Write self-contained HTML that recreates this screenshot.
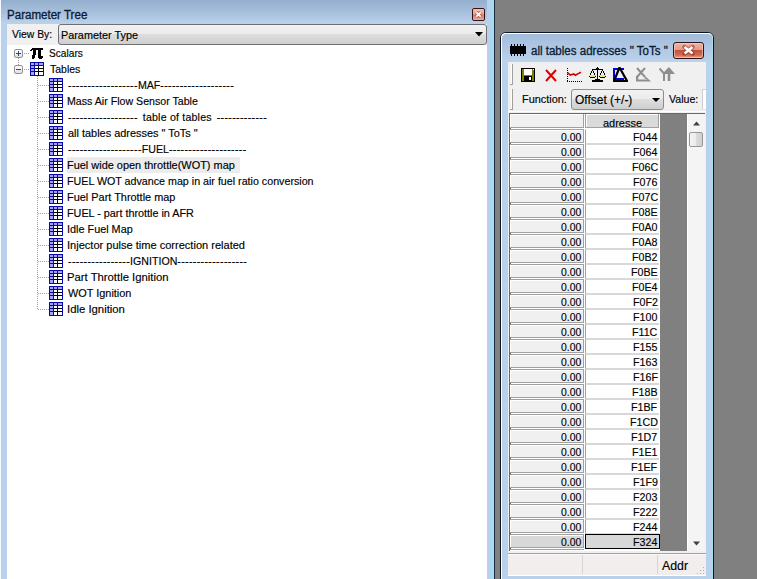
<!DOCTYPE html><html><head><meta charset="utf-8"><style>
*{margin:0;padding:0;box-sizing:border-box}
html,body{width:757px;height:579px;overflow:hidden;background:#808080;font-family:"Liberation Sans", sans-serif}
.a{position:absolute}
.t{position:absolute;white-space:pre;font-family:"Liberation Sans", sans-serif;transform-origin:0 0;-webkit-text-stroke:0.15px currentColor}
</style></head><body><div class="a" style="left:0;top:0;width:495px;height:579px;background:linear-gradient(#95afce 0px,#a6bfdb 12px,#b9d1ea 23px,#b9d1ea 100%)"></div>
<div class="a" style="left:0;top:0;width:1px;height:579px;background:#f6f9fd"></div>
<div class="a" style="left:487px;top:0;width:7px;height:579px;background:linear-gradient(90deg,#bccfea,#b4d4ee 40%,#a2dbf4 85%,#9edcf4)"></div>
<div class="a" style="left:494px;top:0;width:1px;height:579px;background:#1f2f3f"></div>
<div class="t" style="left:7.04px;top:9px;font-size:12px;line-height:12px;color:#0b1a33;letter-spacing:0px;transform:scaleX(0.9634);-webkit-text-stroke:0.3px #0b1a33">Parameter Tree</div>
<div class="a" style="left:472px;top:8px;width:13px;height:13px;border:1px solid #3a1212;border-radius:2px;background:linear-gradient(#f2c2b8,#e8a898 45%,#d07868 55%,#eab0a4)"></div>
<svg class="a" style="left:472px;top:8px" width="13" height="13"><path d="M4.3 4.3 L8.7 8.7 M8.7 4.3 L4.3 8.7" stroke="#8a3a30" stroke-width="3.6" stroke-opacity="0.6"/><path d="M4.3 4.3 L8.7 8.7 M8.7 4.3 L4.3 8.7" stroke="#fff" stroke-width="1.9"/></svg>
<div class="a" style="left:7px;top:24px;width:480px;height:21px;background:#f0f0f0"></div>
<div class="t" style="left:12.00px;top:29px;font-size:11px;line-height:11px;color:#000;letter-spacing:0px;transform:scaleX(0.9429);">View By:</div>
<div class="a" style="left:58px;top:24px;width:429px;height:21px;border:1px solid #707070;border-radius:3px;background:linear-gradient(#f2f2f2 0%,#ebebeb 50%,#dddddd 50%,#cfcfcf 100%)"></div>
<div class="t" style="left:61.01px;top:30px;font-size:11px;line-height:11px;color:#000;letter-spacing:0px;transform:scaleX(0.9857);">Parameter Type</div>
<svg class="a" style="left:475px;top:32px" width="8" height="5"><path d="M0 0H8L4 4.5Z" fill="#000"/></svg>
<div class="a" style="left:7px;top:45px;width:480px;height:534px;background:#fff"></div>
<svg width="0" height="0" style="position:absolute"><defs>
<symbol id="tbl" viewBox="0 0 14 14" shape-rendering="crispEdges">
<rect x="0" y="0" width="14" height="14" fill="#0808a8"/>
<rect x="1" y="1" width="12" height="12" fill="#a4a4f4"/>
<rect x="5" y="4" width="8" height="9" fill="#000"/>
<rect x="5" y="4" width="3" height="2" fill="#fff"/><rect x="9" y="4" width="4" height="2" fill="#fff"/>
<rect x="5" y="7" width="3" height="2" fill="#fff"/><rect x="9" y="7" width="4" height="2" fill="#fff"/>
<rect x="5" y="10" width="3" height="3" fill="#fff"/><rect x="9" y="10" width="4" height="3" fill="#fff"/>
<rect x="4" y="0" width="1" height="14" fill="#0808a8"/><rect x="0" y="3" width="14" height="1" fill="#0808a8"/>
<rect x="8" y="0" width="1" height="4" fill="#0808a8"/>
<rect x="0" y="6" width="5" height="1" fill="#0808a8"/><rect x="0" y="9" width="5" height="1" fill="#0808a8"/>
</symbol>
<symbol id="pi" viewBox="0 0 14 11" shape-rendering="crispEdges">
<path d="M2 0H13V2H11V8H13V10H12V11H9V10H8V2H6V7H5V10H4V11H2V7H3V2H2V3H0V2H1V1H2Z" fill="#000"/>
</symbol>
</defs></svg>
<div class="a" style="left:18px;top:58px;width:1px;height:7px;background:repeating-linear-gradient(#a0a0a0 0 1px,transparent 1px 2px)"></div>
<div class="a" style="left:14px;top:49px;width:9px;height:9px;border:1px solid #939393;border-radius:2px;background:linear-gradient(#fff,#e0e0e0)"></div><div class="a" style="left:16px;top:53px;width:5px;height:1px;background:#2c4d7a"></div><div class="a" style="left:18px;top:51px;width:1px;height:5px;background:#2c4d7a"></div>
<div class="a" style="left:24px;top:53px;width:6px;height:1px;background:repeating-linear-gradient(90deg,#a0a0a0 0 1px,transparent 1px 2px)"></div>
<svg class="a" style="left:30px;top:48px" width="14" height="11"><use href="#pi"/></svg>
<div class="t" style="left:48.88px;top:48px;font-size:11px;line-height:11px;color:#000;letter-spacing:0px;transform:scaleX(0.9222);">Scalars</div>
<div class="a" style="left:14px;top:65px;width:9px;height:9px;border:1px solid #939393;border-radius:2px;background:linear-gradient(#fff,#e0e0e0)"></div><div class="a" style="left:16px;top:69px;width:5px;height:1px;background:#2c4d7a"></div>
<div class="a" style="left:24px;top:69px;width:6px;height:1px;background:repeating-linear-gradient(90deg,#a0a0a0 0 1px,transparent 1px 2px)"></div>
<svg class="a" style="left:30px;top:62px" width="14" height="14"><use href="#tbl"/></svg>
<div class="t" style="left:49.80px;top:64px;font-size:11px;line-height:11px;color:#000;letter-spacing:0px;transform:scaleX(0.9531);">Tables</div>
<div class="a" style="left:37px;top:76px;width:1px;height:234px;background:repeating-linear-gradient(#a0a0a0 0 1px,transparent 1px 2px)"></div>
<div class="a" style="left:38px;top:85px;width:11px;height:1px;background:repeating-linear-gradient(90deg,#a0a0a0 0 1px,transparent 1px 2px)"></div>
<svg class="a" style="left:49px;top:78px" width="14" height="14"><use href="#tbl"/></svg>
<div class="t" style="left:68.30px;top:80px;font-size:11px;line-height:11px;color:#000;letter-spacing:0px;transform:scaleX(0.9650);"><span style='letter-spacing:0.36px'>------------------</span>MAF<span style='letter-spacing:0.36px'>-------------------</span></div>
<div class="a" style="left:38px;top:101px;width:11px;height:1px;background:repeating-linear-gradient(90deg,#a0a0a0 0 1px,transparent 1px 2px)"></div>
<svg class="a" style="left:49px;top:94px" width="14" height="14"><use href="#tbl"/></svg>
<div class="t" style="left:67.33px;top:96px;font-size:11px;line-height:11px;color:#000;letter-spacing:0px;transform:scaleX(0.9657);">Mass Air Flow Sensor Table</div>
<div class="a" style="left:38px;top:117px;width:11px;height:1px;background:repeating-linear-gradient(90deg,#a0a0a0 0 1px,transparent 1px 2px)"></div>
<svg class="a" style="left:49px;top:110px" width="14" height="14"><use href="#tbl"/></svg>
<div class="t" style="left:68.30px;top:112px;font-size:11px;line-height:11px;color:#000;letter-spacing:0px;transform:scaleX(0.9650);"><span style='letter-spacing:0.36px'>------------------</span> <span style="margin:0 2px;letter-spacing:0.2px">table of tables</span> <span style='letter-spacing:0.36px'>-------------</span></div>
<div class="a" style="left:38px;top:133px;width:11px;height:1px;background:repeating-linear-gradient(90deg,#a0a0a0 0 1px,transparent 1px 2px)"></div>
<svg class="a" style="left:49px;top:126px" width="14" height="14"><use href="#tbl"/></svg>
<div class="t" style="left:68.30px;top:128px;font-size:11px;line-height:11px;color:#000;letter-spacing:0px;transform:scaleX(0.9931);">all tables adresses &quot; ToTs &quot;</div>
<div class="a" style="left:38px;top:149px;width:11px;height:1px;background:repeating-linear-gradient(90deg,#a0a0a0 0 1px,transparent 1px 2px)"></div>
<svg class="a" style="left:49px;top:142px" width="14" height="14"><use href="#tbl"/></svg>
<div class="t" style="left:68.30px;top:144px;font-size:11px;line-height:11px;color:#000;letter-spacing:0px;transform:scaleX(0.9650);"><span style='letter-spacing:0.36px'>-------------------</span>FUEL<span style='letter-spacing:0.36px'>--------------------</span></div>
<div class="a" style="left:38px;top:165px;width:11px;height:1px;background:repeating-linear-gradient(90deg,#a0a0a0 0 1px,transparent 1px 2px)"></div>
<div class="a" style="left:67px;top:157px;width:173px;height:16px;background:#ececec"></div>
<svg class="a" style="left:49px;top:158px" width="14" height="14"><use href="#tbl"/></svg>
<div class="t" style="left:67.31px;top:160px;font-size:11px;line-height:11px;color:#000;letter-spacing:0px;transform:scaleX(0.9946);">Fuel wide open throttle(WOT) map</div>
<div class="a" style="left:38px;top:181px;width:11px;height:1px;background:repeating-linear-gradient(90deg,#a0a0a0 0 1px,transparent 1px 2px)"></div>
<svg class="a" style="left:49px;top:174px" width="14" height="14"><use href="#tbl"/></svg>
<div class="t" style="left:67.33px;top:176px;font-size:11px;line-height:11px;color:#000;letter-spacing:0px;transform:scaleX(0.9718);">FUEL WOT advance map in air fuel ratio conversion</div>
<div class="a" style="left:38px;top:197px;width:11px;height:1px;background:repeating-linear-gradient(90deg,#a0a0a0 0 1px,transparent 1px 2px)"></div>
<svg class="a" style="left:49px;top:190px" width="14" height="14"><use href="#tbl"/></svg>
<div class="t" style="left:67.31px;top:192px;font-size:11px;line-height:11px;color:#000;letter-spacing:0px;transform:scaleX(0.9926);">Fuel Part Throttle map</div>
<div class="a" style="left:38px;top:213px;width:11px;height:1px;background:repeating-linear-gradient(90deg,#a0a0a0 0 1px,transparent 1px 2px)"></div>
<svg class="a" style="left:49px;top:206px" width="14" height="14"><use href="#tbl"/></svg>
<div class="t" style="left:67.32px;top:208px;font-size:11px;line-height:11px;color:#000;letter-spacing:0px;transform:scaleX(0.9820);">FUEL - part throttle in AFR</div>
<div class="a" style="left:38px;top:229px;width:11px;height:1px;background:repeating-linear-gradient(90deg,#a0a0a0 0 1px,transparent 1px 2px)"></div>
<svg class="a" style="left:49px;top:222px" width="14" height="14"><use href="#tbl"/></svg>
<div class="t" style="left:67.31px;top:224px;font-size:11px;line-height:11px;color:#000;letter-spacing:0px;transform:scaleX(0.9862);">Idle Fuel Map</div>
<div class="a" style="left:38px;top:245px;width:11px;height:1px;background:repeating-linear-gradient(90deg,#a0a0a0 0 1px,transparent 1px 2px)"></div>
<svg class="a" style="left:49px;top:238px" width="14" height="14"><use href="#tbl"/></svg>
<div class="t" style="left:67.30px;top:240px;font-size:11px;line-height:11px;color:#000;letter-spacing:0px;transform:scaleX(1.0040);">Injector pulse time correction related</div>
<div class="a" style="left:38px;top:261px;width:11px;height:1px;background:repeating-linear-gradient(90deg,#a0a0a0 0 1px,transparent 1px 2px)"></div>
<svg class="a" style="left:49px;top:254px" width="14" height="14"><use href="#tbl"/></svg>
<div class="t" style="left:68.30px;top:256px;font-size:11px;line-height:11px;color:#000;letter-spacing:0px;transform:scaleX(0.9650);"><span style='letter-spacing:0.36px'>----------------</span>IGNITION<span style='letter-spacing:0.36px'>------------------</span></div>
<div class="a" style="left:38px;top:277px;width:11px;height:1px;background:repeating-linear-gradient(90deg,#a0a0a0 0 1px,transparent 1px 2px)"></div>
<svg class="a" style="left:49px;top:270px" width="14" height="14"><use href="#tbl"/></svg>
<div class="t" style="left:67.27px;top:272px;font-size:11px;line-height:11px;color:#000;letter-spacing:0px;transform:scaleX(1.0268);">Part Throttle Ignition</div>
<div class="a" style="left:38px;top:293px;width:11px;height:1px;background:repeating-linear-gradient(90deg,#a0a0a0 0 1px,transparent 1px 2px)"></div>
<svg class="a" style="left:49px;top:286px" width="14" height="14"><use href="#tbl"/></svg>
<div class="t" style="left:68.30px;top:288px;font-size:11px;line-height:11px;color:#000;letter-spacing:0px;transform:scaleX(0.9905);">WOT Ignition</div>
<div class="a" style="left:38px;top:309px;width:11px;height:1px;background:repeating-linear-gradient(90deg,#a0a0a0 0 1px,transparent 1px 2px)"></div>
<svg class="a" style="left:49px;top:302px" width="14" height="14"><use href="#tbl"/></svg>
<div class="t" style="left:67.27px;top:304px;font-size:11px;line-height:11px;color:#000;letter-spacing:0px;transform:scaleX(1.0291);">Idle Ignition</div>
<div class="a" style="left:500px;top:32px;width:214px;height:560px;border:1px solid #0d1520;border-radius:6px 6px 0 0;background:#fff"></div>
<div class="a" style="left:501px;top:33px;width:212px;height:560px;border-radius:5px 5px 0 0;border-top:1px solid #fff;border-left:1px solid #fff;border-right:1px solid #a8dcf0;background:linear-gradient(#a2bcdb 0px,#aec6e2 12px,#bcd3ec 28px,#b9d1ea 60px,#b9d1ea 100%)"></div>
<svg class="a" style="left:510px;top:44px" width="17" height="12" shape-rendering="crispEdges"><rect x="0" y="2" width="16" height="8" fill="#000"/><rect x="1" y="0" width="1" height="2" fill="#000"/><rect x="1" y="10" width="1" height="2" fill="#000"/><rect x="4" y="0" width="1" height="2" fill="#000"/><rect x="4" y="10" width="1" height="2" fill="#000"/><rect x="7" y="0" width="1" height="2" fill="#000"/><rect x="7" y="10" width="1" height="2" fill="#000"/><rect x="10" y="0" width="1" height="2" fill="#000"/><rect x="10" y="10" width="1" height="2" fill="#000"/><rect x="13" y="0" width="1" height="2" fill="#000"/><rect x="13" y="10" width="1" height="2" fill="#000"/></svg>
<div class="t" style="left:530.80px;top:45px;font-size:12px;line-height:12px;color:#0b1a33;letter-spacing:0px;transform:scaleX(0.9613);-webkit-text-stroke:0.3px #0b1a33">all tables adresses &quot; ToTs &quot;</div>
<div class="a" style="left:673px;top:42px;width:31px;height:17px;border:1px solid #2e1414;border-radius:3px;box-shadow:inset 0 0 0 1px rgba(255,210,200,0.6);background:linear-gradient(#eeb4a8 0%,#e49a8a 45%,#c85038 50%,#d26a52 80%,#e8a494 100%)"></div>
<svg class="a" style="left:673px;top:42px" width="31" height="17"><path d="M11.5 5 L19.5 11.5 M19.5 5 L11.5 11.5" stroke="#7a2a20" stroke-width="4.4" stroke-opacity="0.55" stroke-linecap="round"/><path d="M11.5 5 L19.5 11.5 M19.5 5 L11.5 11.5" stroke="#fff" stroke-width="2.6"/></svg>
<div class="a" style="left:508px;top:62px;width:198px;height:513px;background:#f0f0f0"></div>
<div class="a" style="left:511px;top:64px;width:1px;height:20px;background:#fff"></div><div class="a" style="left:512px;top:64px;width:1px;height:21px;background:#a0a0a0"></div><div class="a" style="left:510px;top:84px;width:3px;height:1px;background:#a0a0a0"></div>
<div class="a" style="left:511px;top:89px;width:1px;height:20px;background:#fff"></div><div class="a" style="left:512px;top:89px;width:1px;height:21px;background:#a0a0a0"></div><div class="a" style="left:510px;top:109px;width:3px;height:1px;background:#a0a0a0"></div>
<svg class="a" style="left:521px;top:68px" width="14" height="14" shape-rendering="crispEdges"><rect x="0" y="0" width="14" height="14" fill="#000"/><rect x="1" y="1" width="12" height="12" fill="#808000"/><rect x="3" y="1" width="8" height="6" fill="#fff"/><rect x="3" y="8" width="8" height="5" fill="#000"/><rect x="8" y="9" width="2" height="3" fill="#fff"/><rect x="12" y="1" width="1" height="1" fill="#fff"/></svg>
<svg class="a" style="left:545px;top:69px" width="12" height="13"><path d="M1 1 L11 12 M11 1 L1 12" stroke="#e00000" stroke-width="2"/></svg>
<svg class="a" style="left:567px;top:68px" width="15" height="14" shape-rendering="crispEdges"><rect x="0" y="0" width="1" height="1" fill="#000"/><rect x="0" y="2" width="1" height="1" fill="#000"/><rect x="0" y="4" width="1" height="1" fill="#000"/><rect x="0" y="6" width="1" height="1" fill="#000"/><rect x="0" y="8" width="1" height="1" fill="#000"/><rect x="0" y="10" width="1" height="1" fill="#000"/><rect x="0" y="12" width="1" height="1" fill="#000"/><rect x="0" y="13" width="1" height="1" fill="#000"/><rect x="2" y="13" width="1" height="1" fill="#000"/><rect x="4" y="13" width="1" height="1" fill="#000"/><rect x="6" y="13" width="1" height="1" fill="#000"/><rect x="8" y="13" width="1" height="1" fill="#000"/><rect x="10" y="13" width="1" height="1" fill="#000"/><rect x="12" y="13" width="1" height="1" fill="#000"/><rect x="14" y="13" width="1" height="1" fill="#000"/><path d="M0.5 4.7 L3.3 7 L6.8 6 L8.5 7.3 L11.2 5.6 L14 4.2" stroke="#d00000" stroke-width="1.6" fill="none" shape-rendering="auto"/></svg>
<svg class="a" style="left:587px;top:64px" width="20" height="18" shape-rendering="crispEdges"><rect x="10" y="3" width="1" height="14" fill="#000"/><rect x="9" y="4" width="3" height="1" fill="#000"/><rect x="5" y="5" width="11" height="1" fill="#000"/><rect x="5" y="6" width="1" height="1" fill="#000"/><rect x="15" y="6" width="1" height="1" fill="#000"/><rect x="4" y="7" width="1" height="2" fill="#000"/><rect x="6" y="7" width="1" height="2" fill="#000"/><rect x="14" y="7" width="1" height="2" fill="#000"/><rect x="16" y="7" width="1" height="2" fill="#000"/><rect x="3" y="9" width="1" height="2" fill="#000"/><rect x="7" y="9" width="1" height="2" fill="#000"/><rect x="13" y="9" width="1" height="2" fill="#000"/><rect x="17" y="9" width="1" height="2" fill="#000"/><rect x="2" y="11" width="7" height="2" fill="#e8e878"/><rect x="12" y="11" width="7" height="2" fill="#e8e878"/><rect x="3" y="13" width="5" height="1" fill="#000"/><rect x="13" y="13" width="5" height="1" fill="#000"/><rect x="2" y="12" width="1" height="1" fill="#000"/><rect x="8" y="12" width="1" height="1" fill="#000"/><rect x="12" y="12" width="1" height="1" fill="#000"/><rect x="18" y="12" width="1" height="1" fill="#000"/><rect x="5" y="16" width="11" height="2" fill="#000"/><rect x="8" y="15" width="5" height="1" fill="#000"/></svg>
<svg class="a" style="left:613px;top:67px" width="15" height="15" shape-rendering="crispEdges"><rect x="0" y="1" width="11" height="2" fill="#0000e0"/><rect x="0" y="1" width="2" height="13" fill="#0000e0"/><rect x="2" y="11" width="9" height="2" fill="#0000e0"/><path d="M6.5 0.5 L1 14 H14 Z" fill="none" stroke="#000" stroke-width="2.2" shape-rendering="auto"/></svg>
<svg class="a" style="left:636px;top:67px" width="16" height="15"><path d="M1 1L9 10 M9 1L1 10" stroke="#8e8e8e" stroke-width="2" fill="none"/><path d="M0 9V14.5H15L9.5 9.5L8.5 11.5L12 12.5H2.2V9Z" fill="#8e8e8e"/></svg>
<svg class="a" style="left:659px;top:67px" width="16" height="15"><path d="M0.5 1.5L5 6.5 M9.5 2L5 6.5 M5 6V14" stroke="#8e8e8e" stroke-width="2" fill="none"/><path d="M9.5 14V6 M10.5 14V6" stroke="#8e8e8e" stroke-width="1.6"/><path d="M4 7H16L10 0Z" fill="#8e8e8e"/></svg>
<div class="t" style="left:521.81px;top:94px;font-size:11px;line-height:11px;color:#000;letter-spacing:0px;transform:scaleX(0.9909);">Function:</div>
<div class="a" style="left:571px;top:89px;width:93px;height:21px;border:1px solid #8c8c8c;border-radius:3px;background:linear-gradient(#f2f2f2 0%,#ebebeb 50%,#dddddd 50%,#cfcfcf 100%)"></div>
<div class="t" style="left:574.60px;top:94px;font-size:12px;line-height:12px;color:#000;letter-spacing:0px;transform:scaleX(0.9982);">Offset (+/-)</div>
<svg class="a" style="left:652px;top:98px" width="8" height="5"><path d="M0 0H8L4 4Z" fill="#000"/></svg>
<div class="t" style="left:669.00px;top:94px;font-size:11px;line-height:11px;color:#000;letter-spacing:0px;transform:scaleX(0.9633);">Value:</div>
<div class="a" style="left:702px;top:89px;width:4px;height:21px;background:#fff;border-left:1px solid #cfcfcf;border-top:1px solid #cfcfcf;border-bottom:1px solid #e4e4e4"></div>
<div class="a" style="left:508px;top:111px;width:198px;height:1px;background:#fff"></div>
<div class="a" style="left:508px;top:113px;width:197px;height:438px;background:#808080"></div>
<div class="a" style="left:509px;top:113px;width:196px;height:1px;background:#696969"></div>
<div class="a" style="left:509px;top:113px;width:2px;height:438px;background:#696969"></div>
<div class="a" style="left:508px;top:113px;width:1px;height:438px;background:#f0f0f0"></div>
<div class="a" style="left:511px;top:114px;width:149px;height:437px;background:#fff"></div>
<div class="a" style="left:510px;top:114px;width:74px;height:14px;border-right:1px solid #a0a0a0;border-bottom:1px solid #a0a0a0;box-shadow:inset 1px 1px 0 #fff;background:#f0f0f0"></div>
<div class="a" style="left:585px;top:114px;width:74px;height:14px;border-left:1px solid #a0a0a0;border-right:1px solid #a0a0a0;border-bottom:1px solid #a0a0a0;box-shadow:inset 1px 1px 0 #fff;background:#dadada"></div>
<div class="t" style="left:602.70px;top:118px;font-size:11px;line-height:11px;color:#000;letter-spacing:0px;transform:scaleX(0.9974);">adresse</div>
<div class="a" style="left:510px;top:129px;width:74px;height:14px;border:1px solid #a0a0a0;border-left:none;box-shadow:inset 1px 1px 0 #fff;background:#f0f0f0"></div>
<div class="t" style="left:560.60px;top:132px;font-size:11px;line-height:11px;color:#000;letter-spacing:0px;transform:scaleX(0.9429);">0.00</div>
<div class="a" style="left:585px;top:129px;width:74px;height:15px;border-left:1px solid #a0a0a0;border-bottom:1px solid #d8d8d8;border-top:1px solid #fff;background:#fff"></div>
<div class="t" style="left:633.25px;top:132px;font-size:11px;line-height:11px;color:#000;letter-spacing:0px;transform:scaleX(0.9700);">F044</div>
<div class="a" style="left:510px;top:144px;width:74px;height:14px;border:1px solid #a0a0a0;border-left:none;box-shadow:inset 1px 1px 0 #fff;background:#f0f0f0"></div>
<div class="t" style="left:560.60px;top:147px;font-size:11px;line-height:11px;color:#000;letter-spacing:0px;transform:scaleX(0.9429);">0.00</div>
<div class="a" style="left:585px;top:144px;width:74px;height:15px;border-left:1px solid #a0a0a0;border-bottom:1px solid #d8d8d8;border-top:1px solid #d8d8d8;background:#fff"></div>
<div class="t" style="left:633.25px;top:147px;font-size:11px;line-height:11px;color:#000;letter-spacing:0px;transform:scaleX(0.9700);">F064</div>
<div class="a" style="left:510px;top:159px;width:74px;height:14px;border:1px solid #a0a0a0;border-left:none;box-shadow:inset 1px 1px 0 #fff;background:#f0f0f0"></div>
<div class="t" style="left:560.60px;top:162px;font-size:11px;line-height:11px;color:#000;letter-spacing:0px;transform:scaleX(0.9429);">0.00</div>
<div class="a" style="left:585px;top:159px;width:74px;height:15px;border-left:1px solid #a0a0a0;border-bottom:1px solid #d8d8d8;border-top:1px solid #d8d8d8;background:#fff"></div>
<div class="t" style="left:632.28px;top:162px;font-size:11px;line-height:11px;color:#000;letter-spacing:0px;transform:scaleX(0.9700);">F06C</div>
<div class="a" style="left:510px;top:174px;width:74px;height:14px;border:1px solid #a0a0a0;border-left:none;box-shadow:inset 1px 1px 0 #fff;background:#f0f0f0"></div>
<div class="t" style="left:560.60px;top:177px;font-size:11px;line-height:11px;color:#000;letter-spacing:0px;transform:scaleX(0.9429);">0.00</div>
<div class="a" style="left:585px;top:174px;width:74px;height:15px;border-left:1px solid #a0a0a0;border-bottom:1px solid #d8d8d8;border-top:1px solid #d8d8d8;background:#fff"></div>
<div class="t" style="left:633.25px;top:177px;font-size:11px;line-height:11px;color:#000;letter-spacing:0px;transform:scaleX(0.9700);">F076</div>
<div class="a" style="left:510px;top:189px;width:74px;height:14px;border:1px solid #a0a0a0;border-left:none;box-shadow:inset 1px 1px 0 #fff;background:#f0f0f0"></div>
<div class="t" style="left:560.60px;top:192px;font-size:11px;line-height:11px;color:#000;letter-spacing:0px;transform:scaleX(0.9429);">0.00</div>
<div class="a" style="left:585px;top:189px;width:74px;height:15px;border-left:1px solid #a0a0a0;border-bottom:1px solid #d8d8d8;border-top:1px solid #d8d8d8;background:#fff"></div>
<div class="t" style="left:632.28px;top:192px;font-size:11px;line-height:11px;color:#000;letter-spacing:0px;transform:scaleX(0.9700);">F07C</div>
<div class="a" style="left:510px;top:204px;width:74px;height:14px;border:1px solid #a0a0a0;border-left:none;box-shadow:inset 1px 1px 0 #fff;background:#f0f0f0"></div>
<div class="t" style="left:560.60px;top:207px;font-size:11px;line-height:11px;color:#000;letter-spacing:0px;transform:scaleX(0.9429);">0.00</div>
<div class="a" style="left:585px;top:204px;width:74px;height:15px;border-left:1px solid #a0a0a0;border-bottom:1px solid #d8d8d8;border-top:1px solid #d8d8d8;background:#fff"></div>
<div class="t" style="left:632.28px;top:207px;font-size:11px;line-height:11px;color:#000;letter-spacing:0px;transform:scaleX(0.9700);">F08E</div>
<div class="a" style="left:510px;top:219px;width:74px;height:14px;border:1px solid #a0a0a0;border-left:none;box-shadow:inset 1px 1px 0 #fff;background:#f0f0f0"></div>
<div class="t" style="left:560.60px;top:222px;font-size:11px;line-height:11px;color:#000;letter-spacing:0px;transform:scaleX(0.9429);">0.00</div>
<div class="a" style="left:585px;top:219px;width:74px;height:15px;border-left:1px solid #a0a0a0;border-bottom:1px solid #d8d8d8;border-top:1px solid #d8d8d8;background:#fff"></div>
<div class="t" style="left:632.28px;top:222px;font-size:11px;line-height:11px;color:#000;letter-spacing:0px;transform:scaleX(0.9700);">F0A0</div>
<div class="a" style="left:510px;top:234px;width:74px;height:14px;border:1px solid #a0a0a0;border-left:none;box-shadow:inset 1px 1px 0 #fff;background:#f0f0f0"></div>
<div class="t" style="left:560.60px;top:237px;font-size:11px;line-height:11px;color:#000;letter-spacing:0px;transform:scaleX(0.9429);">0.00</div>
<div class="a" style="left:585px;top:234px;width:74px;height:15px;border-left:1px solid #a0a0a0;border-bottom:1px solid #d8d8d8;border-top:1px solid #d8d8d8;background:#fff"></div>
<div class="t" style="left:632.28px;top:237px;font-size:11px;line-height:11px;color:#000;letter-spacing:0px;transform:scaleX(0.9700);">F0A8</div>
<div class="a" style="left:510px;top:249px;width:74px;height:14px;border:1px solid #a0a0a0;border-left:none;box-shadow:inset 1px 1px 0 #fff;background:#f0f0f0"></div>
<div class="t" style="left:560.60px;top:252px;font-size:11px;line-height:11px;color:#000;letter-spacing:0px;transform:scaleX(0.9429);">0.00</div>
<div class="a" style="left:585px;top:249px;width:74px;height:15px;border-left:1px solid #a0a0a0;border-bottom:1px solid #d8d8d8;border-top:1px solid #d8d8d8;background:#fff"></div>
<div class="t" style="left:632.28px;top:252px;font-size:11px;line-height:11px;color:#000;letter-spacing:0px;transform:scaleX(0.9700);">F0B2</div>
<div class="a" style="left:510px;top:264px;width:74px;height:14px;border:1px solid #a0a0a0;border-left:none;box-shadow:inset 1px 1px 0 #fff;background:#f0f0f0"></div>
<div class="t" style="left:560.60px;top:267px;font-size:11px;line-height:11px;color:#000;letter-spacing:0px;transform:scaleX(0.9429);">0.00</div>
<div class="a" style="left:585px;top:264px;width:74px;height:15px;border-left:1px solid #a0a0a0;border-bottom:1px solid #d8d8d8;border-top:1px solid #d8d8d8;background:#fff"></div>
<div class="t" style="left:631.31px;top:267px;font-size:11px;line-height:11px;color:#000;letter-spacing:0px;transform:scaleX(0.9700);">F0BE</div>
<div class="a" style="left:510px;top:279px;width:74px;height:14px;border:1px solid #a0a0a0;border-left:none;box-shadow:inset 1px 1px 0 #fff;background:#f0f0f0"></div>
<div class="t" style="left:560.60px;top:282px;font-size:11px;line-height:11px;color:#000;letter-spacing:0px;transform:scaleX(0.9429);">0.00</div>
<div class="a" style="left:585px;top:279px;width:74px;height:15px;border-left:1px solid #a0a0a0;border-bottom:1px solid #d8d8d8;border-top:1px solid #d8d8d8;background:#fff"></div>
<div class="t" style="left:632.28px;top:282px;font-size:11px;line-height:11px;color:#000;letter-spacing:0px;transform:scaleX(0.9700);">F0E4</div>
<div class="a" style="left:510px;top:294px;width:74px;height:14px;border:1px solid #a0a0a0;border-left:none;box-shadow:inset 1px 1px 0 #fff;background:#f0f0f0"></div>
<div class="t" style="left:560.60px;top:297px;font-size:11px;line-height:11px;color:#000;letter-spacing:0px;transform:scaleX(0.9429);">0.00</div>
<div class="a" style="left:585px;top:294px;width:74px;height:15px;border-left:1px solid #a0a0a0;border-bottom:1px solid #d8d8d8;border-top:1px solid #d8d8d8;background:#fff"></div>
<div class="t" style="left:633.25px;top:297px;font-size:11px;line-height:11px;color:#000;letter-spacing:0px;transform:scaleX(0.9700);">F0F2</div>
<div class="a" style="left:510px;top:309px;width:74px;height:14px;border:1px solid #a0a0a0;border-left:none;box-shadow:inset 1px 1px 0 #fff;background:#f0f0f0"></div>
<div class="t" style="left:560.60px;top:312px;font-size:11px;line-height:11px;color:#000;letter-spacing:0px;transform:scaleX(0.9429);">0.00</div>
<div class="a" style="left:585px;top:309px;width:74px;height:15px;border-left:1px solid #a0a0a0;border-bottom:1px solid #d8d8d8;border-top:1px solid #d8d8d8;background:#fff"></div>
<div class="t" style="left:633.25px;top:312px;font-size:11px;line-height:11px;color:#000;letter-spacing:0px;transform:scaleX(0.9700);">F100</div>
<div class="a" style="left:510px;top:324px;width:74px;height:14px;border:1px solid #a0a0a0;border-left:none;box-shadow:inset 1px 1px 0 #fff;background:#f0f0f0"></div>
<div class="t" style="left:560.60px;top:327px;font-size:11px;line-height:11px;color:#000;letter-spacing:0px;transform:scaleX(0.9429);">0.00</div>
<div class="a" style="left:585px;top:324px;width:74px;height:15px;border-left:1px solid #a0a0a0;border-bottom:1px solid #d8d8d8;border-top:1px solid #d8d8d8;background:#fff"></div>
<div class="t" style="left:632.28px;top:327px;font-size:11px;line-height:11px;color:#000;letter-spacing:0px;transform:scaleX(0.9700);">F11C</div>
<div class="a" style="left:510px;top:339px;width:74px;height:14px;border:1px solid #a0a0a0;border-left:none;box-shadow:inset 1px 1px 0 #fff;background:#f0f0f0"></div>
<div class="t" style="left:560.60px;top:342px;font-size:11px;line-height:11px;color:#000;letter-spacing:0px;transform:scaleX(0.9429);">0.00</div>
<div class="a" style="left:585px;top:339px;width:74px;height:15px;border-left:1px solid #a0a0a0;border-bottom:1px solid #d8d8d8;border-top:1px solid #d8d8d8;background:#fff"></div>
<div class="t" style="left:633.25px;top:342px;font-size:11px;line-height:11px;color:#000;letter-spacing:0px;transform:scaleX(0.9700);">F155</div>
<div class="a" style="left:510px;top:354px;width:74px;height:14px;border:1px solid #a0a0a0;border-left:none;box-shadow:inset 1px 1px 0 #fff;background:#f0f0f0"></div>
<div class="t" style="left:560.60px;top:357px;font-size:11px;line-height:11px;color:#000;letter-spacing:0px;transform:scaleX(0.9429);">0.00</div>
<div class="a" style="left:585px;top:354px;width:74px;height:15px;border-left:1px solid #a0a0a0;border-bottom:1px solid #d8d8d8;border-top:1px solid #d8d8d8;background:#fff"></div>
<div class="t" style="left:633.25px;top:357px;font-size:11px;line-height:11px;color:#000;letter-spacing:0px;transform:scaleX(0.9700);">F163</div>
<div class="a" style="left:510px;top:369px;width:74px;height:14px;border:1px solid #a0a0a0;border-left:none;box-shadow:inset 1px 1px 0 #fff;background:#f0f0f0"></div>
<div class="t" style="left:560.60px;top:372px;font-size:11px;line-height:11px;color:#000;letter-spacing:0px;transform:scaleX(0.9429);">0.00</div>
<div class="a" style="left:585px;top:369px;width:74px;height:15px;border-left:1px solid #a0a0a0;border-bottom:1px solid #d8d8d8;border-top:1px solid #d8d8d8;background:#fff"></div>
<div class="t" style="left:633.25px;top:372px;font-size:11px;line-height:11px;color:#000;letter-spacing:0px;transform:scaleX(0.9700);">F16F</div>
<div class="a" style="left:510px;top:384px;width:74px;height:14px;border:1px solid #a0a0a0;border-left:none;box-shadow:inset 1px 1px 0 #fff;background:#f0f0f0"></div>
<div class="t" style="left:560.60px;top:387px;font-size:11px;line-height:11px;color:#000;letter-spacing:0px;transform:scaleX(0.9429);">0.00</div>
<div class="a" style="left:585px;top:384px;width:74px;height:15px;border-left:1px solid #a0a0a0;border-bottom:1px solid #d8d8d8;border-top:1px solid #d8d8d8;background:#fff"></div>
<div class="t" style="left:632.28px;top:387px;font-size:11px;line-height:11px;color:#000;letter-spacing:0px;transform:scaleX(0.9700);">F18B</div>
<div class="a" style="left:510px;top:399px;width:74px;height:14px;border:1px solid #a0a0a0;border-left:none;box-shadow:inset 1px 1px 0 #fff;background:#f0f0f0"></div>
<div class="t" style="left:560.60px;top:402px;font-size:11px;line-height:11px;color:#000;letter-spacing:0px;transform:scaleX(0.9429);">0.00</div>
<div class="a" style="left:585px;top:399px;width:74px;height:15px;border-left:1px solid #a0a0a0;border-bottom:1px solid #d8d8d8;border-top:1px solid #d8d8d8;background:#fff"></div>
<div class="t" style="left:631.31px;top:402px;font-size:11px;line-height:11px;color:#000;letter-spacing:0px;transform:scaleX(0.9700);">F1BF</div>
<div class="a" style="left:510px;top:414px;width:74px;height:14px;border:1px solid #a0a0a0;border-left:none;box-shadow:inset 1px 1px 0 #fff;background:#f0f0f0"></div>
<div class="t" style="left:560.60px;top:417px;font-size:11px;line-height:11px;color:#000;letter-spacing:0px;transform:scaleX(0.9429);">0.00</div>
<div class="a" style="left:585px;top:414px;width:74px;height:15px;border-left:1px solid #a0a0a0;border-bottom:1px solid #d8d8d8;border-top:1px solid #d8d8d8;background:#fff"></div>
<div class="t" style="left:630.34px;top:417px;font-size:11px;line-height:11px;color:#000;letter-spacing:0px;transform:scaleX(0.9700);">F1CD</div>
<div class="a" style="left:510px;top:429px;width:74px;height:14px;border:1px solid #a0a0a0;border-left:none;box-shadow:inset 1px 1px 0 #fff;background:#f0f0f0"></div>
<div class="t" style="left:560.60px;top:432px;font-size:11px;line-height:11px;color:#000;letter-spacing:0px;transform:scaleX(0.9429);">0.00</div>
<div class="a" style="left:585px;top:429px;width:74px;height:15px;border-left:1px solid #a0a0a0;border-bottom:1px solid #d8d8d8;border-top:1px solid #d8d8d8;background:#fff"></div>
<div class="t" style="left:631.31px;top:432px;font-size:11px;line-height:11px;color:#000;letter-spacing:0px;transform:scaleX(0.9700);">F1D7</div>
<div class="a" style="left:510px;top:444px;width:74px;height:14px;border:1px solid #a0a0a0;border-left:none;box-shadow:inset 1px 1px 0 #fff;background:#f0f0f0"></div>
<div class="t" style="left:560.60px;top:447px;font-size:11px;line-height:11px;color:#000;letter-spacing:0px;transform:scaleX(0.9429);">0.00</div>
<div class="a" style="left:585px;top:444px;width:74px;height:15px;border-left:1px solid #a0a0a0;border-bottom:1px solid #d8d8d8;border-top:1px solid #d8d8d8;background:#fff"></div>
<div class="t" style="left:632.28px;top:447px;font-size:11px;line-height:11px;color:#000;letter-spacing:0px;transform:scaleX(0.9700);">F1E1</div>
<div class="a" style="left:510px;top:459px;width:74px;height:14px;border:1px solid #a0a0a0;border-left:none;box-shadow:inset 1px 1px 0 #fff;background:#f0f0f0"></div>
<div class="t" style="left:560.60px;top:462px;font-size:11px;line-height:11px;color:#000;letter-spacing:0px;transform:scaleX(0.9429);">0.00</div>
<div class="a" style="left:585px;top:459px;width:74px;height:15px;border-left:1px solid #a0a0a0;border-bottom:1px solid #d8d8d8;border-top:1px solid #d8d8d8;background:#fff"></div>
<div class="t" style="left:631.31px;top:462px;font-size:11px;line-height:11px;color:#000;letter-spacing:0px;transform:scaleX(0.9700);">F1EF</div>
<div class="a" style="left:510px;top:474px;width:74px;height:14px;border:1px solid #a0a0a0;border-left:none;box-shadow:inset 1px 1px 0 #fff;background:#f0f0f0"></div>
<div class="t" style="left:560.60px;top:477px;font-size:11px;line-height:11px;color:#000;letter-spacing:0px;transform:scaleX(0.9429);">0.00</div>
<div class="a" style="left:585px;top:474px;width:74px;height:15px;border-left:1px solid #a0a0a0;border-bottom:1px solid #d8d8d8;border-top:1px solid #d8d8d8;background:#fff"></div>
<div class="t" style="left:633.25px;top:477px;font-size:11px;line-height:11px;color:#000;letter-spacing:0px;transform:scaleX(0.9700);">F1F9</div>
<div class="a" style="left:510px;top:489px;width:74px;height:14px;border:1px solid #a0a0a0;border-left:none;box-shadow:inset 1px 1px 0 #fff;background:#f0f0f0"></div>
<div class="t" style="left:560.60px;top:492px;font-size:11px;line-height:11px;color:#000;letter-spacing:0px;transform:scaleX(0.9429);">0.00</div>
<div class="a" style="left:585px;top:489px;width:74px;height:15px;border-left:1px solid #a0a0a0;border-bottom:1px solid #d8d8d8;border-top:1px solid #d8d8d8;background:#fff"></div>
<div class="t" style="left:633.25px;top:492px;font-size:11px;line-height:11px;color:#000;letter-spacing:0px;transform:scaleX(0.9700);">F203</div>
<div class="a" style="left:510px;top:504px;width:74px;height:14px;border:1px solid #a0a0a0;border-left:none;box-shadow:inset 1px 1px 0 #fff;background:#f0f0f0"></div>
<div class="t" style="left:560.60px;top:507px;font-size:11px;line-height:11px;color:#000;letter-spacing:0px;transform:scaleX(0.9429);">0.00</div>
<div class="a" style="left:585px;top:504px;width:74px;height:15px;border-left:1px solid #a0a0a0;border-bottom:1px solid #d8d8d8;border-top:1px solid #d8d8d8;background:#fff"></div>
<div class="t" style="left:633.25px;top:507px;font-size:11px;line-height:11px;color:#000;letter-spacing:0px;transform:scaleX(0.9700);">F222</div>
<div class="a" style="left:510px;top:519px;width:74px;height:14px;border:1px solid #a0a0a0;border-left:none;box-shadow:inset 1px 1px 0 #fff;background:#f0f0f0"></div>
<div class="t" style="left:560.60px;top:522px;font-size:11px;line-height:11px;color:#000;letter-spacing:0px;transform:scaleX(0.9429);">0.00</div>
<div class="a" style="left:585px;top:519px;width:74px;height:15px;border-left:1px solid #a0a0a0;border-bottom:1px solid #d8d8d8;border-top:1px solid #d8d8d8;background:#fff"></div>
<div class="t" style="left:633.25px;top:522px;font-size:11px;line-height:11px;color:#000;letter-spacing:0px;transform:scaleX(0.9700);">F244</div>
<div class="a" style="left:510px;top:534px;width:74px;height:14px;border:1px solid #a0a0a0;border-left:none;box-shadow:inset 1px 1px 0 #fff;background:#d8d8d8"></div>
<div class="t" style="left:560.60px;top:537px;font-size:11px;line-height:11px;color:#000;letter-spacing:0px;transform:scaleX(0.9429);">0.00</div>
<div class="a" style="left:585px;top:534px;width:75px;height:15px;border:1px solid #000;background:#d8d8d8"></div>
<div class="t" style="left:633.25px;top:537px;font-size:11px;line-height:11px;color:#000;letter-spacing:0px;transform:scaleX(0.9700);">F324</div>
<div class="a" style="left:510px;top:549px;width:74px;height:2px;border-top:1px solid #a0a0a0;box-shadow:inset 1px 1px 0 #fff;background:#f0f0f0"></div>
<div class="a" style="left:687px;top:114px;width:18px;height:437px;background:#f4f4f4;border-left:1px solid #fff"></div>
<svg class="a" style="left:693px;top:121px" width="7" height="5"><path d="M0 4.5H7L3.5 0.5Z" fill="#404040"/></svg>
<svg class="a" style="left:693px;top:541px" width="7" height="5"><path d="M0 0.5H7L3.5 4.5Z" fill="#404040"/></svg>
<div class="a" style="left:689px;top:132px;width:14px;height:15px;border:1px solid #979797;border-radius:2px;background:linear-gradient(90deg,#f4f4f4 0%,#ececec 50%,#dcdcdc 50%,#d0d0d0 100%)"></div>
<div class="a" style="left:508px;top:551px;width:198px;height:2px;background:#f0f0f0"></div>
<div class="a" style="left:508px;top:553px;width:198px;height:1px;background:#a0a0a0"></div>
<div class="a" style="left:508px;top:554px;width:198px;height:22px;background:#f1eeed;border-top:1px solid #fbfbfb;border-bottom:1px solid #fff"></div>
<div class="a" style="left:582px;top:555px;width:1px;height:19px;background:#d8d4d4"></div>
<div class="a" style="left:657px;top:555px;width:1px;height:19px;background:#d8d4d4"></div>
<div class="t" style="left:662.30px;top:560px;font-size:12px;line-height:12px;color:#000;letter-spacing:0px;transform:scaleX(1.0280);">Addr</div>
<svg class="a" style="left:696px;top:566px" width="10" height="10" shape-rendering="crispEdges"><rect x="7" y="1" width="1" height="1" fill="#b0b0b0"/><rect x="4" y="4" width="1" height="1" fill="#b0b0b0"/><rect x="7" y="4" width="1" height="1" fill="#b0b0b0"/><rect x="1" y="7" width="1" height="1" fill="#b0b0b0"/><rect x="4" y="7" width="1" height="1" fill="#b0b0b0"/><rect x="7" y="7" width="1" height="1" fill="#b0b0b0"/></svg></body></html>
